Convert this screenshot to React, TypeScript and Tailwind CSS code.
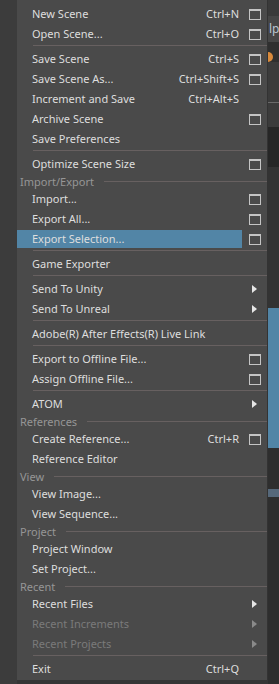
import { ReactNode } from "react";

type Entry =
  | { kind: "item"; label: string; shortcut?: string; box?: boolean; arrow?: boolean; active?: boolean; disabled?: boolean }
  | { kind: "sep" }
  | { kind: "header"; label: string };

const entries: Entry[] = [
  { kind: "item", label: "New Scene", shortcut: "Ctrl+N", box: true },
  { kind: "item", label: "Open Scene...", shortcut: "Ctrl+O", box: true },
  { kind: "sep" },
  { kind: "item", label: "Save Scene", shortcut: "Ctrl+S", box: true },
  { kind: "item", label: "Save Scene As...", shortcut: "Ctrl+Shift+S", box: true },
  { kind: "item", label: "Increment and Save", shortcut: "Ctrl+Alt+S" },
  { kind: "item", label: "Archive Scene", box: true },
  { kind: "item", label: "Save Preferences" },
  { kind: "sep" },
  { kind: "item", label: "Optimize Scene Size", box: true },
  { kind: "header", label: "Import/Export" },
  { kind: "item", label: "Import...", box: true },
  { kind: "item", label: "Export All...", box: true },
  { kind: "item", label: "Export Selection...", box: true, active: true },
  { kind: "sep" },
  { kind: "item", label: "Game Exporter" },
  { kind: "sep" },
  { kind: "item", label: "Send To Unity", arrow: true },
  { kind: "item", label: "Send To Unreal", arrow: true },
  { kind: "sep" },
  { kind: "item", label: "Adobe(R) After Effects(R) Live Link" },
  { kind: "sep" },
  { kind: "item", label: "Export to Offline File...", box: true },
  { kind: "item", label: "Assign Offline File...", box: true },
  { kind: "sep" },
  { kind: "item", label: "ATOM", arrow: true },
  { kind: "header", label: "References" },
  { kind: "item", label: "Create Reference...", shortcut: "Ctrl+R", box: true },
  { kind: "item", label: "Reference Editor" },
  { kind: "header", label: "View" },
  { kind: "item", label: "View Image..." },
  { kind: "item", label: "View Sequence..." },
  { kind: "header", label: "Project" },
  { kind: "item", label: "Project Window" },
  { kind: "item", label: "Set Project..." },
  { kind: "header", label: "Recent" },
  { kind: "item", label: "Recent Files", arrow: true },
  { kind: "item", label: "Recent Increments", arrow: true, disabled: true },
  { kind: "item", label: "Recent Projects", arrow: true, disabled: true },
  { kind: "sep" },
  { kind: "item", label: "Exit", shortcut: "Ctrl+Q" },
];

function OptionBox() {
  return <div className="w-[12px] h-[11px] border border-t-2 border-[#c4c4c4]" />;
}

function Arrow({ dim }: { dim?: boolean }) {
  return (
    <svg width="5" height="8" viewBox="0 0 5 8">
      <path d="M0 0 L5 4 L0 8 Z" fill={dim ? "#8a8a8a" : "#e6e6e6"} />
    </svg>
  );
}

function Row({ e }: { e: Entry }): ReactNode {
  if (e.kind === "sep") {
    return (
      <div className="h-[5px] pl-[16px] pt-[1px]">
        <div className="h-px bg-[#676060]" />
      </div>
    );
  }
  if (e.kind === "header") {
    return (
      <div className="h-[15px] flex items-center pl-[3px] gap-[10px]">
        <span className="text-[#969696] leading-none">{e.label}</span>
        <div className="flex-1 h-px bg-[#676060] mt-[-1px]" />
      </div>
    );
  }
  const color = e.disabled ? "text-[#7a7a7a]" : "text-[#dedede]";
  return (
    <div className="h-[20px] flex">
      <div
        className={`flex-1 flex items-center pl-[15px] pr-[3px] my-[1px] ${e.active ? "bg-[#5285a6]" : ""} ${color}`}
      >
        <span className="flex-1 whitespace-nowrap">{e.label}</span>
        {e.shortcut && <span className="whitespace-nowrap">{e.shortcut}</span>}
      </div>
      <div className="w-[25px] flex items-center justify-center">
        {e.box && <OptionBox />}
        {e.arrow && <Arrow dim={e.disabled} />}
      </div>
    </div>
  );
}

export default function App() {
  return (
    <div
      className="w-[279px] h-[684px] flex bg-[#3a3a3a] overflow-hidden text-[11px]"
      style={{ fontFamily: '"Noto Sans", "Open Sans", sans-serif' }}
    >
      <div className="w-[17px] bg-[#3c3c3c] shrink-0" />
      <div className="w-[251px] shrink-0 flex flex-col">
        <div className="bg-[#4a4a4a] pt-[4px] pb-[1px] border-r border-[#333]">
          {entries.map((e, i) => (
            <Row key={i} e={e} />
          ))}
        </div>
        <div className="flex-1 bg-[#353535]" />
      </div>
      <div className="flex-1 flex flex-col bg-[#2f2f2f] overflow-hidden">
        <div className="h-[16px] bg-[#3a3a3a]" />
        <div className="h-[26px] bg-[#464646] text-[#b8c4d0] text-[12px] leading-[26px] pl-[1px]">lp</div>
        <div className="h-[10px]" />
        <div className="w-[10px] h-[10px] rounded-full bg-[#d88a3c] -ml-[5px]" />
        <div className="h-[40px] bg-[#3b3b3b]" />
        <div className="h-px bg-[#6a6a6a]" />
        <div className="h-[24px] bg-[#3b3b3b]" />
        <div className="h-[40px] bg-[#262626]" />
        <div className="h-[141px] bg-[#333333]" />
        <div className="h-[140px] bg-[#5285a6]" />
        <div className="h-[41px] bg-[#2e2e2e]" />
        <div className="h-[8px] bg-[#56687a]" />
        <div className="flex-1 bg-[#2e2e2e]" />
      </div>
    </div>
  );
}
